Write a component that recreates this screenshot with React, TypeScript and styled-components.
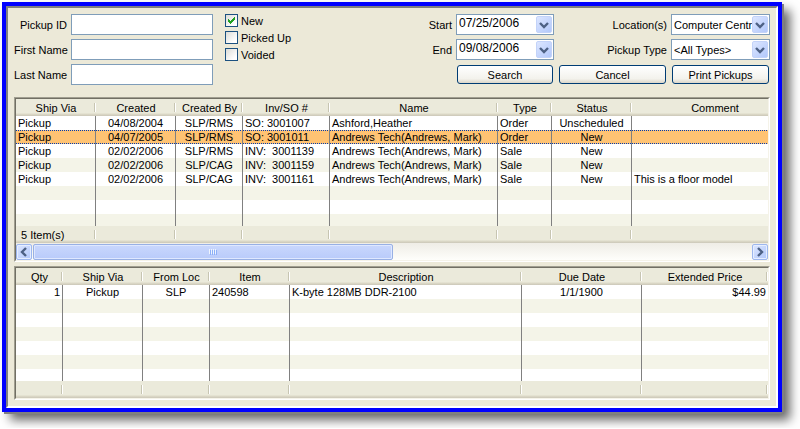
import React from "react";
import styled, { createGlobalStyle, css } from "styled-components";

const Global = createGlobalStyle`
  * { box-sizing: border-box; }
  body {
    margin: 0;
    background: #fff;
    color: #000;
    font: 11px/14px "Liberation Sans", Arial, sans-serif;
  }
  input, select, button { font: inherit; color: inherit; }
`;

const Page = styled.div`
  padding: 2px 18px 16px 2px;
  overflow: hidden;
`;

const Window = styled.main`
  border: 4px solid #0000ff;
  box-shadow: 2px 2px 0 #808080, 8px 8px 10px rgba(0, 0, 0, 0.6);
`;

const Panel = styled.div`
  display: flex;
  flex-direction: column;
  background: #ece9d8;
  border: 2px solid #fff;
  border-top-color: #808080;
  border-left-color: #808080;
  padding: 6px;
`;

const SearchForm = styled.form`
  display: flex;
  align-items: flex-start;
  margin-bottom: 12px;
`;

const PersonFields = styled.div`
  display: grid;
  grid-template-columns: 53px 142px;
  grid-auto-rows: 21px;
  gap: 4px;
`;

const FieldLabel = styled.label`
  align-self: center;
  text-align: right;
  white-space: nowrap;
`;

const TextBox = styled.input`
  width: 100%;
  height: 21px;
  margin: 0;
  padding: 0 3px;
  background: #fff;
  border: 1px solid #7f9db9;
  border-radius: 0;
  outline: 0;
`;

const StatusFilters = styled.fieldset`
  display: flex;
  flex-direction: column;
  gap: 4px;
  margin: 0 auto 0 12px;
  padding: 0;
  border: 0;
`;

const CheckLabel = styled.label`
  display: flex;
  align-items: center;
  gap: 3px;
  height: 13px;
  white-space: nowrap;
`;

const CheckBox = styled.input`
  appearance: none;
  width: 13px;
  height: 13px;
  margin: 0;
  border: 1px solid #1c5180;
  background: linear-gradient(135deg, #dcdcd7, #fff 80%);
  &:checked {
    background: url("data:image/svg+xml,%3Csvg xmlns='http://www.w3.org/2000/svg' viewBox='0 0 11 11' shape-rendering='crispEdges'%3E%3Cpath fill='%2321a121' d='M2 4h1v1h1v1h1v-1h1v-1h1v-1h1v-1h1v3h-1v1h-1v1h-1v1h-1v1h-1v-1h-1v-1h-1z'/%3E%3C/svg%3E"),
      linear-gradient(135deg, #dcdcd7, #fff 80%);
  }
`;

const Criteria = styled.div`
  display: grid;
  grid-template-columns: auto 98px 109px 99px;
  grid-auto-rows: 21px;
  gap: 4px;
`;

const Combo = styled.div`
  display: flex;
  height: 21px;
  padding: 1px;
  background: #fff;
  border: 1px solid #7f9db9;
`;

const DateInput = styled.input`
  flex: 1;
  min-width: 0;
  margin: 0;
  padding: 0 1px 3px;
  border: 0;
  background: transparent;
  font-size: 12px;
  outline: 0;
`;

const Choice = styled.select`
  appearance: none;
  flex: 1;
  min-width: 0;
  margin: 0;
  padding: 0 0 0 1px;
  border: 0;
  background: transparent;
  white-space: nowrap;
  outline: 0;
`;

const blueButton = css`
  display: flex;
  align-items: center;
  justify-content: center;
  flex: none;
  width: 16px;
  margin: 0;
  padding: 0;
  border: 1px solid #c3d3f9;
  border-radius: 2px;
  background: linear-gradient(135deg, #dce6ff, #b2c8fb);
`;

const DropButton = styled.button`
  ${blueButton}
`;

const PushButton = styled.button<{ $start?: number }>`
  grid-column-start: ${(p) => p.$start ?? "auto"};
  height: 19px;
  margin: 1px 1px 0;
  padding: 0;
  border: 1px solid #003c74;
  border-radius: 3px;
  background: linear-gradient(#fff, #f3f2ec 75%, #dcd6c9);
  text-align: center;
`;

const ListBox = styled.section<{ $gap?: boolean }>`
  margin-bottom: ${(p) => (p.$gap ? 4 : 0)}px;
  border: 1px solid #fff;
  border-top-color: #a09e90;
  border-left-color: #a09e90;
`;

const ListInner = styled.div`
  overflow: hidden;
  border: 1px solid #f5f3e9;
  border-top-color: #716f64;
  border-left-color: #716f64;
`;

const Table = styled.table<{ $overflow?: number }>`
  width: calc(100% + ${(p) => p.$overflow ?? 0}px);
  table-layout: fixed;
  border-collapse: separate;
  border-spacing: 0;
`;

const Col = styled.col<{ $width?: number }>`
  width: ${(p) => (p.$width ? `${p.$width}px` : "auto")};
`;

const band = css`
  background:
    linear-gradient(#fff, #fff) right 0 top 4px / 1px 9px no-repeat,
    linear-gradient(#c7c5b2, #c7c5b2) right 1px top 4px / 1px 9px no-repeat,
    linear-gradient(#ebeadb, #ebeadb 82%, #dedbc9 88%, #cbc7b8) no-repeat;
`;

const HeadCell = styled.th`
  ${band}
  height: 17px;
  padding: 0;
  font-weight: normal;
  text-align: center;
  white-space: nowrap;
`;

const FootCell = styled.td`
  ${band}
  height: 17px;
  padding: 0 5px;
  white-space: nowrap;
`;

type Align = "left" | "center" | "right";

const Row = styled.tr<{ $alt: boolean; $selected: boolean }>`
  background: ${(p) => (p.$selected ? "#ffc373" : p.$alt ? "#f4f4e8" : "#fff")};
`;

const dots = "repeating-linear-gradient(90deg, #003cb4 0 1px, transparent 1px 2px)";

const Cell = styled.td<{ $align: Align; $selected: boolean; $short: boolean }>`
  height: ${(p) => (p.$short ? 12 : 14)}px;
  padding: 0 2px;
  border-right: 1px solid #808080;
  line-height: ${(p) => (p.$short ? 11 : 14)}px;
  text-align: ${(p) => p.$align};
  white-space: pre;
  overflow: hidden;
  &:last-child { border-right: 0; }
  ${(p) =>
    p.$selected &&
    css`
      background:
        ${dots} top / 100% 1px no-repeat,
        ${dots} bottom / 100% 1px no-repeat;
    `}
`;

const ScrollBar = styled.div`
  display: flex;
  height: 17px;
  padding-top: 1px;
  background: linear-gradient(#efede6, #fefefb);
`;

const ScrollButton = styled.button`
  ${blueButton}
  border-color: #9db7ee;
  box-shadow: inset 0 0 0 1px #e6eeff;
`;

const Track = styled.div`
  flex: 1;
  padding-left: 1px;
`;

const Thumb = styled.div`
  display: flex;
  align-items: center;
  justify-content: center;
  width: 50%;
  height: 16px;
  border: 1px solid #98b0e4;
  border-radius: 2px;
  box-shadow: inset 0 0 0 1px #dfe8ff;
  background: linear-gradient(#c9d7fd, #b9cbfa);
`;

interface Column {
  title: string;
  width?: number;
  align: Align;
}

interface GridProps {
  label: string;
  columns: Column[];
  rows: string[][];
  rowCount: number;
  selected?: number;
  footer?: string;
  overflow?: number;
}

function DataGrid({ label, columns, rows, rowCount, selected, footer, overflow }: GridProps) {
  return (
    <Table aria-label={label} $overflow={overflow}>
      <colgroup>
        {columns.map((c) => (
          <Col key={c.title} $width={c.width} />
        ))}
      </colgroup>
      <thead>
        <tr>
          {columns.map((c) => (
            <HeadCell key={c.title} scope="col">{c.title}</HeadCell>
          ))}
        </tr>
      </thead>
      <tbody>
        {Array.from({ length: rowCount }, (_, i) => (
          <Row key={i} $alt={i % 2 === 1} $selected={i === selected}>
            {columns.map((c, j) => (
              <Cell
                key={c.title}
                $align={c.align}
                $selected={i === selected}
                $short={i === rowCount - 1}
              >
                {rows[i]?.[j] ?? ""}
              </Cell>
            ))}
          </Row>
        ))}
      </tbody>
      <tfoot>
        <tr>
          {columns.map((c, i) => (
            <FootCell key={c.title}>{i === 0 ? footer : ""}</FootCell>
          ))}
        </tr>
      </tfoot>
    </Table>
  );
}

const chevrons = {
  down: "M1 3l4 4 4-4",
  left: "M7 1L3 5l4 4",
  right: "M3 1l4 4-4 4",
};

function Chevron({ to }: { to: keyof typeof chevrons }) {
  return (
    <svg width="10" height="10" viewBox="0 0 10 10" aria-hidden="true">
      <path fill="none" stroke="#4d6185" strokeWidth="2.4" d={chevrons[to]} />
    </svg>
  );
}

const pickupColumns: Column[] = [
  { title: "Ship Via", width: 80, align: "left" },
  { title: "Created", width: 80, align: "center" },
  { title: "Created By", width: 67, align: "center" },
  { title: "Inv/SO #", width: 87, align: "left" },
  { title: "Name", width: 168, align: "left" },
  { title: "Type", width: 54, align: "left" },
  { title: "Status", width: 80, align: "center" },
  { title: "Comment", align: "left" },
];

const pickups = [
  ["Pickup", "04/08/2004", "SLP/RMS", "SO: 3001007", "Ashford,Heather", "Order", "Unscheduled", ""],
  ["Pickup", "04/07/2005", "SLP/RMS", "SO: 3001011", "Andrews Tech(Andrews, Mark)", "Order", "New", ""],
  ["Pickup", "02/02/2006", "SLP/RMS", "INV:  3001139", "Andrews Tech(Andrews, Mark)", "Sale", "New", ""],
  ["Pickup", "02/02/2006", "SLP/CAG", "INV:  3001159", "Andrews Tech(Andrews, Mark)", "Sale", "New", ""],
  ["Pickup", "02/02/2006", "SLP/CAG", "INV:  3001161", "Andrews Tech(Andrews, Mark)", "Sale", "New", "This is a floor model"],
];

const itemColumns: Column[] = [
  { title: "Qty", width: 47, align: "right" },
  { title: "Ship Via", width: 80, align: "center" },
  { title: "From Loc", width: 67, align: "center" },
  { title: "Item", width: 80, align: "left" },
  { title: "Description", align: "left" },
  { title: "Due Date", width: 120, align: "center" },
  { title: "Extended Price", width: 126, align: "right" },
];

const items = [["1", "Pickup", "SLP", "240598", "K-byte 128MB DDR-2100", "1/1/1900", "$44.99"]];

export default function App() {
  return (
    <Page>
      <Global />
      <Window>
        <Panel>
          <SearchForm onSubmit={(e) => e.preventDefault()}>
            <PersonFields>
              <FieldLabel htmlFor="pickup-id">Pickup ID</FieldLabel>
              <TextBox id="pickup-id" type="text" />
              <FieldLabel htmlFor="first-name">First Name</FieldLabel>
              <TextBox id="first-name" type="text" />
              <FieldLabel htmlFor="last-name">Last Name</FieldLabel>
              <TextBox id="last-name" type="text" />
            </PersonFields>
            <StatusFilters aria-label="Status">
              <CheckLabel><CheckBox type="checkbox" defaultChecked />New</CheckLabel>
              <CheckLabel><CheckBox type="checkbox" />Picked Up</CheckLabel>
              <CheckLabel><CheckBox type="checkbox" />Voided</CheckLabel>
            </StatusFilters>
            <Criteria>
              <FieldLabel htmlFor="start">Start</FieldLabel>
              <Combo>
                <DateInput id="start" type="text" defaultValue="07/25/2006" />
                <DropButton type="button" aria-label="Choose start date"><Chevron to="down" /></DropButton>
              </Combo>
              <FieldLabel htmlFor="location">Location(s)</FieldLabel>
              <Combo>
                <Choice id="location"><option>Computer Centr</option></Choice>
                <DropButton type="button" aria-label="Show locations"><Chevron to="down" /></DropButton>
              </Combo>
              <FieldLabel htmlFor="end">End</FieldLabel>
              <Combo>
                <DateInput id="end" type="text" defaultValue="09/08/2006" />
                <DropButton type="button" aria-label="Choose end date"><Chevron to="down" /></DropButton>
              </Combo>
              <FieldLabel htmlFor="type">Pickup Type</FieldLabel>
              <Combo>
                <Choice id="type"><option>&lt;All Types&gt;</option></Choice>
                <DropButton type="button" aria-label="Show pickup types"><Chevron to="down" /></DropButton>
              </Combo>
              <PushButton type="submit" $start={2}>Search</PushButton>
              <PushButton type="button">Cancel</PushButton>
              <PushButton type="button">Print Pickups</PushButton>
            </Criteria>
          </SearchForm>

          <ListBox $gap>
            <ListInner>
              <DataGrid
                label="Pickups"
                columns={pickupColumns}
                rows={pickups}
                rowCount={8}
                selected={1}
                footer="5 Item(s)"
                overflow={30}
              />
              <ScrollBar>
                <ScrollButton type="button" aria-label="Scroll left"><Chevron to="left" /></ScrollButton>
                <Track>
                  <Thumb>
                    <svg width="8" height="6" viewBox="0 0 8 6" shapeRendering="crispEdges" aria-hidden="true">
                      <path fill="#eef4fe" d="M0 0h1v5h-1zM2 0h1v5h-1zM4 0h1v5h-1zM6 0h1v5h-1z" />
                      <path fill="#8cb0f8" d="M1 1h1v5h-1zM3 1h1v5h-1zM5 1h1v5h-1zM7 1h1v5h-1z" />
                    </svg>
                  </Thumb>
                </Track>
                <ScrollButton type="button" aria-label="Scroll right"><Chevron to="right" /></ScrollButton>
              </ScrollBar>
            </ListInner>
          </ListBox>

          <ListBox>
            <ListInner>
              <DataGrid label="Pickup items" columns={itemColumns} rows={items} rowCount={7} />
            </ListInner>
          </ListBox>
        </Panel>
      </Window>
    </Page>
  );
}
